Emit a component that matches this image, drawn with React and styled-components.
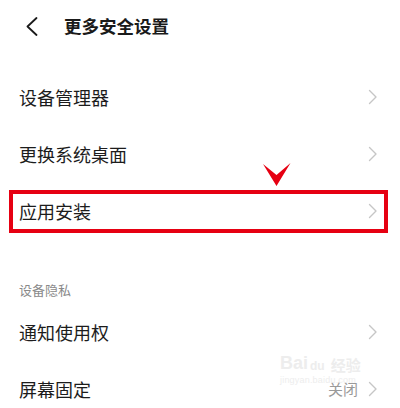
import React from "react";
import styled, { createGlobalStyle } from "styled-components";

const Global = createGlobalStyle`
  html, body { margin: 0; padding: 0; background: #fff; }
  body { font-family: "Noto Sans CJK SC", "Noto Sans", sans-serif; }
`;

const Page = styled.div`
  width: 400px;
  height: 408px;
  overflow: hidden;
  position: relative;
  background: #fff;
  color: #1c1c1c;
`;

const Header = styled.header`
  height: 52px;
  display: flex;
  align-items: center;
  padding-left: 26px;
  gap: 26px;
`;

const Title = styled.h1`
  margin: 0;
  font-size: 17.5px;
  font-weight: 600;
  color: #1a1a1a;
  line-height: 1;
`;

const List = styled.div`
  display: flex;
  flex-direction: column;
  padding-top: 16px;
`;

const Row = styled.div`
  position: relative;
  height: 57px;
  display: flex;
  align-items: center;
  padding: 0 22px 0 19px;
  gap: 10px;
`;

const Label = styled.span`
  flex: 1;
  font-size: 18px;
  line-height: 1;
  color: #1c1c1c;
`;

const Value = styled.span`
  font-size: 15px;
  color: #9a9a9a;
  line-height: 1;
`;

const SectionTitle = styled.div`
  height: 64px;
  display: flex;
  align-items: flex-end;
  padding: 0 19px 4px;
  box-sizing: border-box;
  font-size: 13px;
  color: #8a8a8a;
`;

const Highlight = styled.div`
  position: absolute;
  left: 9px;
  right: 12px;
  top: 8px;
  height: 43px;
  border: 4.5px solid #e60012;
  box-sizing: border-box;
  pointer-events: none;
`;

const Pointer = styled.svg`
  position: absolute;
  left: 263px;
  top: -19px;
`;

const Watermark = styled.div`
  position: absolute;
  left: 280px;
  top: 354px;
  display: flex;
  flex-direction: column;
  align-items: flex-start;
  color: #ededed;
  font-family: "Liberation Sans", sans-serif;
  pointer-events: none;
`;

const WmTop = styled.div`
  display: flex;
  align-items: flex-end;
  gap: 2px;
  font-size: 18px;
  font-weight: 700;
  line-height: 1;
`;

const WmDu = styled.span`
  font-size: 12px;
`;

const WmCn = styled.span`
  font-family: "Noto Sans CJK SC", sans-serif;
  font-size: 15px;
  margin-left: 4px;
`;

const WmSub = styled.div`
  font-size: 9px;
  margin-top: 3px;
  letter-spacing: 0.2px;
`;

const Chevron = () => (
  <svg width="10" height="16" viewBox="0 0 10 16" fill="none">
    <path d="M1.5 1.5 L8 8 L1.5 14.5" stroke="#c6c6c6" strokeWidth="1.4" strokeLinecap="round" strokeLinejoin="round" />
  </svg>
);

const Back = () => (
  <svg width="12" height="19" viewBox="0 0 12 19" fill="none">
    <path d="M10.5 1 L1.5 9.5 L10.5 18" stroke="#1a1a1a" strokeWidth="1.8" strokeLinecap="round" strokeLinejoin="round" />
  </svg>
);

const Item = ({ label, value, children }) => (
  <Row>
    <Label>{label}</Label>
    {value && <Value>{value}</Value>}
    <Chevron />
    {children}
  </Row>
);

export default function App() {
  return (
    <Page>
      <Global />
      <Header>
        <Back />
        <Title>更多安全设置</Title>
      </Header>
      <List>
        <Item label="设备管理器" />
        <Item label="更换系统桌面" />
        <Item label="应用安装">
          <Highlight />
          <Pointer width="28" height="23" viewBox="0 0 28 23">
            <path d="M0 1 L13.5 23 L27.5 0 L13.5 12 Z" fill="#e60012" />
          </Pointer>
        </Item>
        <SectionTitle>设备隐私</SectionTitle>
        <Item label="通知使用权" />
        <Item label="屏幕固定" value="关闭" />
      </List>
      <Watermark>
        <WmTop>
          <span>Bai</span>
          <WmDu>du</WmDu>
          <WmCn>经验</WmCn>
        </WmTop>
        <WmSub>jingyan.baidu.com</WmSub>
      </Watermark>
    </Page>
  );
}
